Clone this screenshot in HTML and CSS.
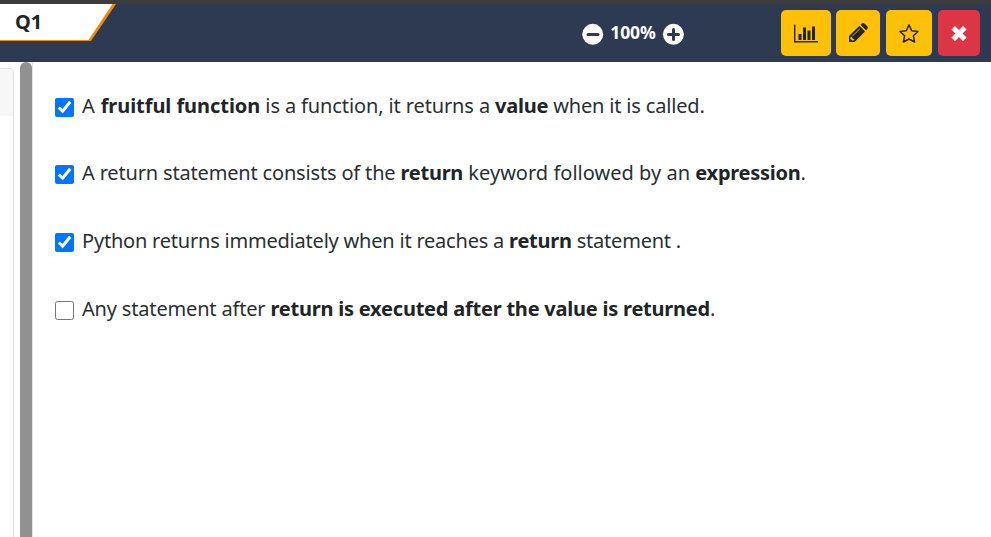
FILE: index.html
```
<!DOCTYPE html>
<html lang="en">
<head>
<meta charset="utf-8">
<title>Q1</title>
<link rel="stylesheet" href="styles.css">
</head>
<body>
<header class="topbar">
  <div class="question-tab">
    <svg class="tab-shape" width="117" height="38" viewBox="0 0 117 38" aria-hidden="true"><path fill="#f28a00" d="M0 0h116L91 37H0z"/><path fill="#fff" d="M0 0h112.5L88.5 36H0z"/></svg>
    <span class="tab-label">Q1</span>
  </div>
  <div class="zoom-controls">
    <svg width="22" height="22" viewBox="0 0 22 22"><circle cx="10.7" cy="11.3" r="10.5" fill="#fff"/><path d="M6 11.5h10" stroke="#2d3a51" stroke-width="3" stroke-linecap="round"/></svg>
    <span class="zoom-value">100%</span>
    <svg width="22" height="22" viewBox="0 0 22 22"><circle cx="11.4" cy="11.3" r="10.5" fill="#fff"/><path d="M6.5 11.5h10M11.5 6.5v10" stroke="#2d3a51" stroke-width="3" stroke-linecap="round"/></svg>
  </div>
  <div class="actions">
    <button class="btn chart"><svg width="24" height="19" viewBox="0 0 24 19"><path d="M.7.5v17.2H24" fill="none" stroke="#212529" stroke-width="1.4"/><path fill="#212529" d="M4.5 10h3v6h-3zM9 3.5h3V16H9zM13.5 6.5h3V16h-3zM18 2.5h3V16h-3z"/></svg></button>
    <button class="btn pencil"><svg width="20" height="20" viewBox="0 0 20 20"><path fill="#212529" d="M1 19v-6L11.5 2.8l5.5 5.6L6.5 19zM12.5 1.8l1-1c1-1 2.2-1 3.2 0l2.3 2.3c1 1 1 2.2 0 3.2l-1 1z"/><path d="M4.5 13 12 5.7" stroke="#ffc107" stroke-width=".9"/><path fill="#ffc107" d="M2.4 14.5l1.1-1 1 2 2 .9-1.2 1.2H4.2l-1.8-1.8z"/></svg></button>
    <button class="btn star"><svg width="20" height="19" viewBox="0 0 20 19"><path fill="none" stroke="#212529" stroke-width="1.5" stroke-linejoin="round" d="M10 .9l2.7 5.8 6.3.8-4.6 4.3 1.2 6.2L10 15l-5.6 3 1.2-6.2L1 7.5l6.3-.8z"/></svg></button>
    <button class="btn close"><svg width="16" height="16" viewBox="0 0 16 16"><path fill="none" stroke="#fff" stroke-width="5" d="M2.2 2.7l11.6 11.6M13.8 2.7L2.2 14.3"/></svg></button>
  </div>
</header>
<main class="workspace">
  <aside class="side"><div class="side-card"><div class="side-head"></div></div></aside>
  <div class="scroll-track"><div class="scroll-thumb"></div></div>
  <section class="options">
    <label class="option"><input type="checkbox" checked><span class="text">A <b class="lead">fruitful function</b><span class="even"> is a function, it returns a </span><b>value</b> when it is called.</span></label>
    <label class="option"><input type="checkbox" checked><span class="text">A return statement consists of the <b>return</b><span class="loose"> keyword followed by an </span><b>expression</b>.</span></label>
    <label class="option"><input type="checkbox" checked><span class="text tight">Python returns immediately when it reaches a <b>return</b> statement .</span></label>
    <label class="option"><input type="checkbox"><span class="text">Any statement after <b class="long">return is executed after the value is returned</b>.</span></label>
  </section>
</main>
</body>
</html>
```
FILE: styles.css
```
* { box-sizing: border-box; }
body {
  margin: 0;
  height: 537px;
  overflow: hidden;
  display: flex;
  flex-direction: column;
  background: #fff;
  color: #212529;
  font-family: "Noto Sans", "Open Sans", sans-serif;
}
.topbar {
  flex: none;
  height: 62px;
  display: flex;
  background: #2d3a51;
  border-top: 4px solid #3c3c3c;
}
.question-tab { position: relative; width: 117px; flex: none; }
.tab-shape { display: block; }
.tab-label {
  position: absolute;
  left: 15px;
  top: 4px;
  font-size: 20px;
  line-height: 28px;
  font-weight: 700;
}
.zoom-controls {
  display: flex;
  align-items: flex-start;
  margin-left: 465px;
  padding-top: 19px;
  width: 102px;
  justify-content: space-between;
}
.zoom-value { color: #fff; font-size: 17.5px; font-weight: 700; line-height: 20px; margin-top: -1px; letter-spacing: -.1px; }
.actions { display: flex; margin-left: 97px; padding-top: 6px; }
.btn {
  display: flex;
  align-items: center;
  justify-content: center;
  height: 46px;
  padding: 0;
  border: 0;
  border-radius: 5px;
  background: #ffc107;
}
.chart { width: 50px; margin-right: 5px; }
.pencil { width: 44px; margin-right: 6px; }
.star { width: 46px; margin-right: 6px; }
.close { width: 42px; background: #dc3545; }
.workspace { flex: 1; display: flex; min-height: 0; }
.side { width: 20px; padding-top: 6px; }
.side-card {
  width: 14px;
  height: 480px;
  border: 1px solid #dfdfdf;
  border-left: 0;
  border-top-right-radius: 5px;
}
.side-head { height: 47px; background: #f7f7f7; border-top-right-radius: 4px; }
.scroll-track { width: 13px; border-right: 1px solid #e1e4e8; }
.scroll-thumb { width: 12px; height: 490px; background: #919191; border-radius: 6px 6px 0 0; }
.options { flex: 1; padding: 28.6px 0 0 22px; }
.option { display: flex; align-items: flex-start; height: 67.8px; }
.option input {
  width: 19px;
  height: 19px;
  margin: 7px 8px 0 0;
  accent-color: #0075ff;
}
.text { font-size: 20px; line-height: 30px; white-space: pre; letter-spacing: -.17px; color: #2b2f33; }
.text b { font-weight: 700; letter-spacing: -.25px; color: #212529; }
.text .lead { margin-left: 1px; letter-spacing: -.05px; }
.text .even { letter-spacing: -.12px; }
.text .loose { letter-spacing: .02px; }
.text .long { letter-spacing: -.22px; }
.text.tight { letter-spacing: -.21px; }
```
